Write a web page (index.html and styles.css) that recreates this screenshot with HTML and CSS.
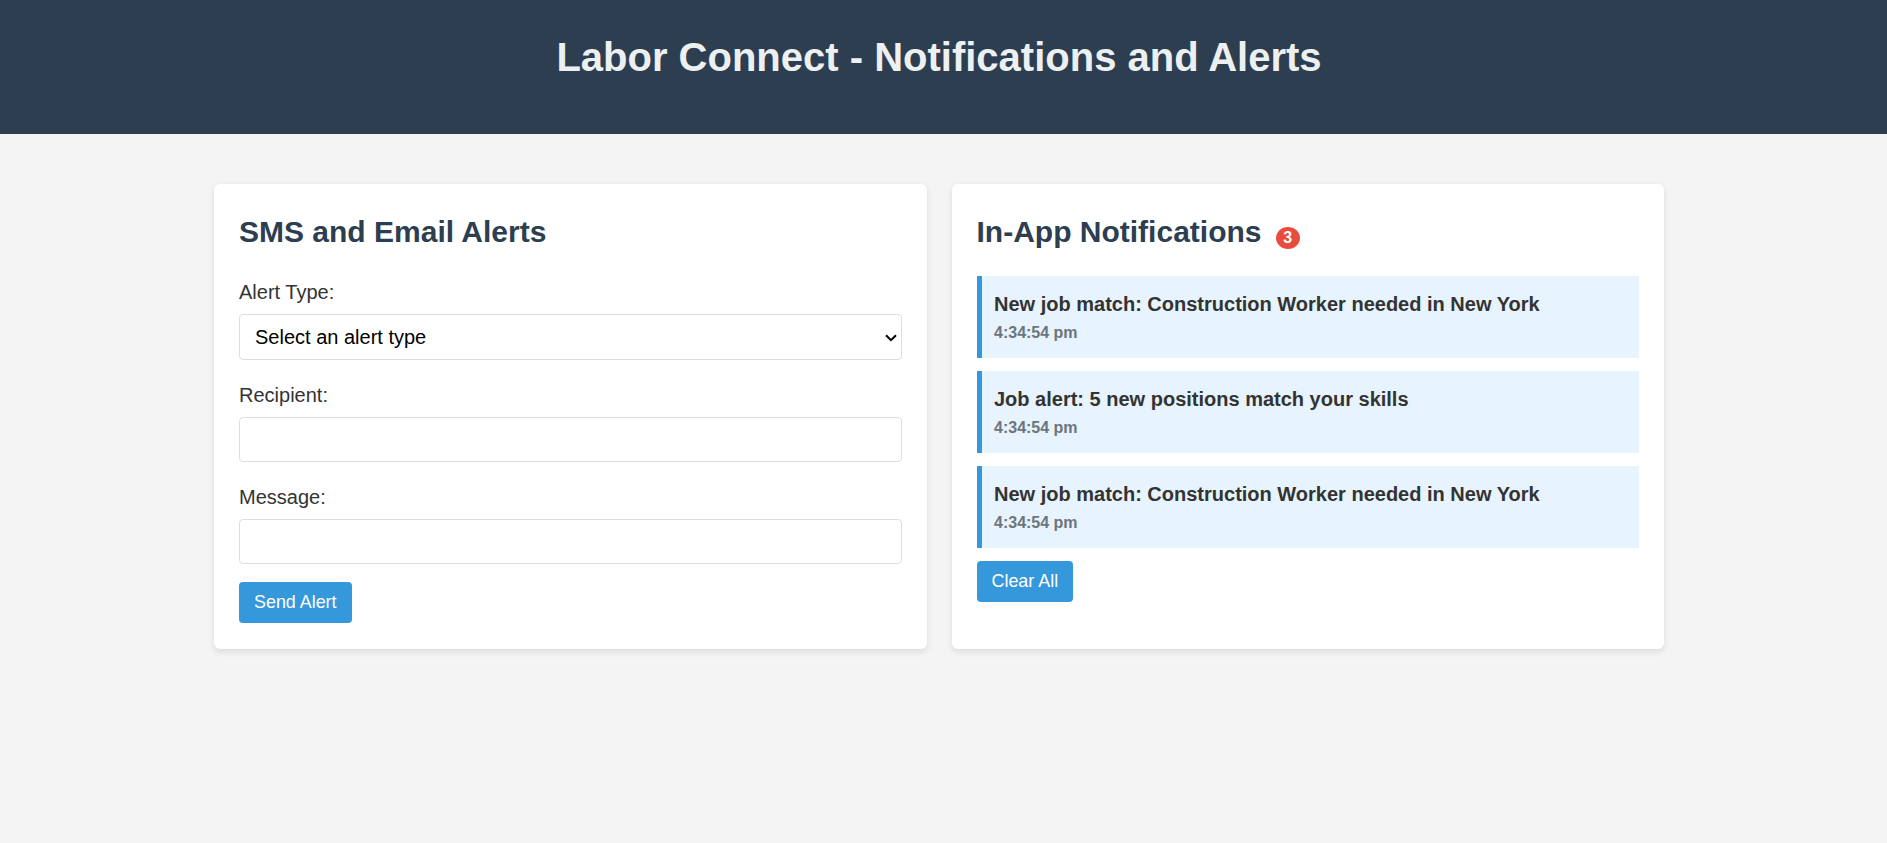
FILE: index.html
```html
<!DOCTYPE html>
<html lang="en">
<head>
<meta charset="utf-8">
<title>Labor Connect - Notifications and Alerts</title>
<link rel="stylesheet" href="styles.css">
</head>
<body>
<header class="header"><h1 class="title">Labor Connect - Notifications and Alerts</h1></header>
<main class="container">
  <section class="card">
    <h2 class="heading">SMS and Email Alerts</h2>
    <form class="form">
      <label class="label" for="type">Alert Type:</label>
      <div class="select-wrap">
        <select class="field select" id="type"><option>Select an alert type</option></select>
        <svg class="arrow" viewBox="0 0 12 8" fill="none" stroke="#000" stroke-width="2"><path d="M1 1.2 6 6.2 11 1.2"/></svg>
      </div>
      <label class="label" for="recipient">Recipient:</label>
      <input class="field" id="recipient" type="text">
      <label class="label" for="message">Message:</label>
      <input class="field" id="message" type="text">
      <button class="button" type="button">Send Alert</button>
    </form>
  </section>
  <section class="card">
    <h2 class="heading">In-App Notifications <span class="badge">3</span></h2>
    <div class="notification"><p class="text">New job match: Construction Worker needed in New York</p><p class="time">4:34:54 pm</p></div>
    <div class="notification"><p class="text">Job alert: 5 new positions match your skills</p><p class="time">4:34:54 pm</p></div>
    <div class="notification"><p class="text">New job match: Construction Worker needed in New York</p><p class="time">4:34:54 pm</p></div>
    <button class="button" type="button">Clear All</button>
  </section>
</main>
</body>
</html>
```
FILE: styles.css
```css
* { box-sizing: border-box; margin: 0; padding: 0; }
body {
  min-height: 843px;
  padding-right: 9px;
  background: #f4f4f4;
  color: #333;
  font: 20px/1.6 "Liberation Sans", Arial, sans-serif;
}
.header {
  height: 134px;
  margin-right: -9px;
  padding: 25px 9px 45px 0;
  background: #2c3e50;
  color: #ecf0f1;
  text-align: center;
}
.title { font-size: 40px; line-height: 64px; }
.container {
  display: grid;
  grid-template-columns: 1fr 1fr;
  gap: 25px;
  width: 1450px;
  margin: 50px auto 0;
}
.card {
  height: 465px;
  padding: 25px;
  border-radius: 6px;
  background: #fff;
  box-shadow: 0 2.5px 6px rgba(0, 0, 0, .1);
}
.heading { height: 48px; margin-bottom: 18.75px; color: #2c3e50; font-size: 30px; line-height: 46px; }
.label { display: block; margin-bottom: 6.25px; }
.field {
  display: block;
  width: 100%;
  height: 44.75px;
  margin-bottom: 18.75px;
  padding: 10px;
  border: 1px solid #ddd;
  border-radius: 4px;
  background: #fff;
  color: #000;
  font: inherit;
  line-height: 23px;
}
.select-wrap { position: relative; }
.select { appearance: none; height: 46px; padding: 10px 15px; }
.arrow { position: absolute; right: 5px; top: 20px; width: 12px; height: 8px; pointer-events: none; }
.button {
  display: block;
  height: 41px;
  padding: 0 15px;
  border: 0;
  border-radius: 4px;
  background: #3498db;
  color: #fff;
  font: 17.9px/21px "Liberation Sans", Arial, sans-serif;
}
.badge {
  display: inline-block;
  width: 24px;
  height: 22px;
  margin-left: 6px;
  border-radius: 50%;
  background: #e74c3c;
  color: #fff;
  font-size: 16px;
  line-height: 22px;
  text-align: center;
  vertical-align: -1px;
}
.notification {
  height: 82.5px;
  margin-bottom: 12.5px;
  padding: 12px 12.5px;
  border-left: 5px solid #3498db;
  background: #e7f3fd;
  font-weight: bold;
}
.time { color: #6c757d; font-size: 16px; line-height: 25.6px; }
```
